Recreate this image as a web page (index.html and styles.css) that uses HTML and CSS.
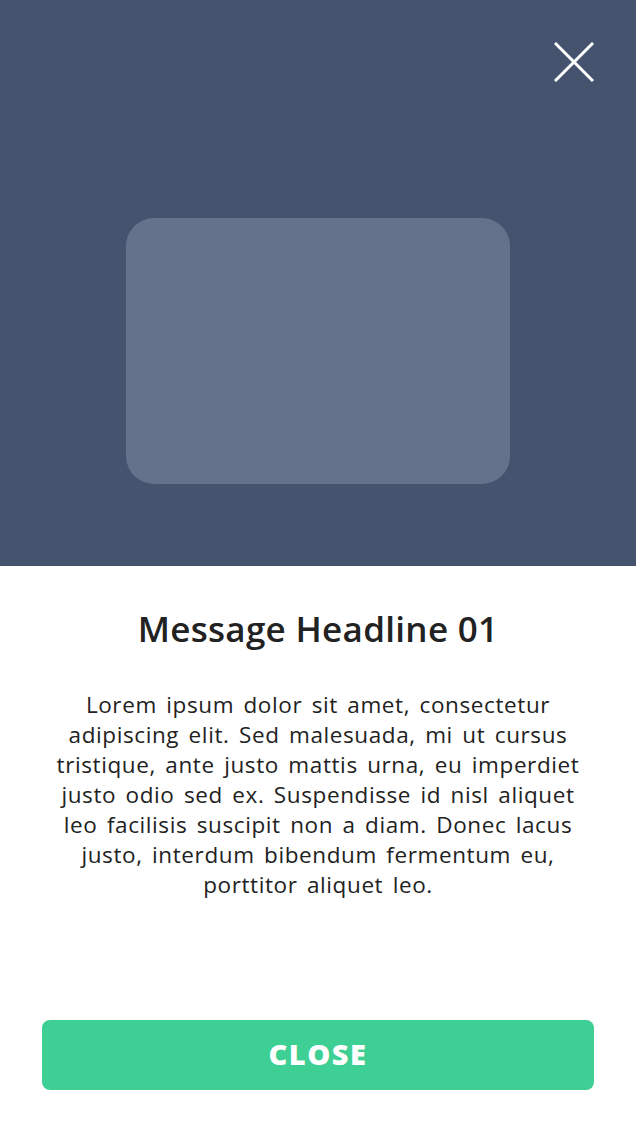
FILE: index.html
```html
<!DOCTYPE html>
<html>
<head>
<meta charset="utf-8">
<link rel="stylesheet" href="styles.css">
</head>
<body>
<div class="screen">
  <section class="hero">
    <button class="close-x" aria-label="Close">
      <svg width="40" height="40" viewBox="0 0 40 40"><path d="M1 1 L39 39 M39 1 L1 39" stroke="#fff" stroke-width="3" fill="none"/></svg>
    </button>
    <div class="placeholder"></div>
  </section>
  <section class="content">
    <h1 class="headline">Message Headline 01</h1>
    <p class="body">Lorem ipsum dolor sit amet, consectetur<br>adipiscing elit. Sed malesuada, mi ut cursus<br>tristique, ante justo mattis urna, eu imperdiet<br>justo odio sed ex. Suspendisse id nisl aliquet<br>leo facilisis suscipit non a diam. Donec lacus<br>justo, interdum bibendum fermentum eu,<br>porttitor aliquet leo.</p>
  </section>
  <div class="actions">
    <button class="btn">CLOSE</button>
  </div>
</div>
</body>
</html>
```
FILE: styles.css
```css
html, body { margin: 0; padding: 0; background: #fff; }
.screen {
  width: 636px;
  height: 1130px;
  display: flex;
  flex-direction: column;
  font-family: "Open Sans", "Lato", sans-serif;
  font-variant-ligatures: none;
}
.hero {
  height: 566px;
  background: #45536f;
  display: flex;
  flex-direction: column;
  align-items: center;
  position: relative;
}
.close-x {
  position: absolute;
  top: 42px;
  right: 42px;
  width: 40px;
  height: 40px;
  padding: 0;
  border: 0;
  background: none;
}
.close-x svg { display: block; }
.placeholder {
  margin-top: 218px;
  width: 384px;
  height: 266px;
  border-radius: 28px;
  background: #65728c;
}
.content {
  display: flex;
  flex-direction: column;
  align-items: center;
  flex: 1;
}
.headline {
  margin: 41px 0 0;
  font-size: 35px;
  line-height: 44px;
  font-weight: 600;
  color: #222;
  letter-spacing: 0.3px;
}
.body {
  margin: 39px 0 0;
  font-size: 22.5px;
  line-height: 30px;
  color: #222;
  text-align: center;
  letter-spacing: 0.6px;
  word-spacing: 3px;
}
.actions {
  padding: 0 42px 40px;
}
.btn {
  width: 100%;
  height: 70px;
  border: 0;
  border-radius: 8px;
  background: #3ecf94;
  color: #fff;
  font-family: "Open Sans", sans-serif;
  font-weight: 800;
  font-size: 29px;
  letter-spacing: 1.5px;
  padding: 0 0 4px;
}
```
